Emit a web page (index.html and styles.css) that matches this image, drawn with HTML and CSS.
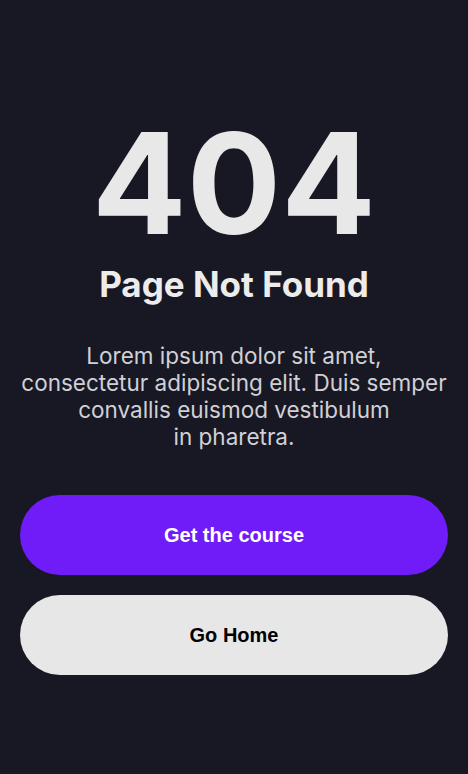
FILE: index.html
```html
<!DOCTYPE html>
<html lang="en">
<head>
<meta charset="utf-8">
<title>404</title>
<link rel="stylesheet" href="styles.css">
</head>
<body>
<main class="page">
  <h1 class="code">404</h1>
  <h2 class="title">Page Not Found</h2>
  <p class="text">Lorem ipsum dolor sit amet,<br>consectetur adipiscing elit. Duis semper<br>convallis euismod vestibulum<br>in pharetra.</p>
  <div class="actions">
    <a class="btn btn-primary" href="#">Get the course</a>
    <a class="btn btn-secondary" href="#">Go Home</a>
  </div>
</main>
</body>
</html>
```
FILE: styles.css
```css
html, body {
  margin: 0;
  padding: 0;
  background: #181824;
  height: 100%;
}
.page {
  display: flex;
  flex-direction: column;
  align-items: center;
  padding: 113px 20px 0;
  font-family: Inter, "Noto Sans", sans-serif;
  color: #e8e8e8;
  text-align: center;
}
.code {
  margin: 0;
  font-size: 140px;
  font-weight: 700;
  line-height: 140px;
  color: #e8e8e8;
}
.title {
  margin: 9px 0 0;
  font-size: 35px;
  font-weight: 700;
  line-height: 44px;
  color: #ececec;
}
.text {
  margin: 36px 0 0;
  font-size: 22.5px;
  line-height: 27px;
  color: #d0d0d6;
}
.actions {
  align-self: stretch;
  display: flex;
  flex-direction: column;
  gap: 20px;
  margin-top: 45px;
}
.btn {
  display: flex;
  align-items: center;
  justify-content: center;
  height: 80px;
  border-radius: 40px;
  font-family: "Liberation Sans", Arial, sans-serif;
  font-weight: 700;
  font-size: 20px;
  text-decoration: none;
}
.btn-primary {
  background: #701cf8;
  color: #ffffff;
}
.btn-secondary {
  background: #e7e7e7;
  color: #000000;
}
```
